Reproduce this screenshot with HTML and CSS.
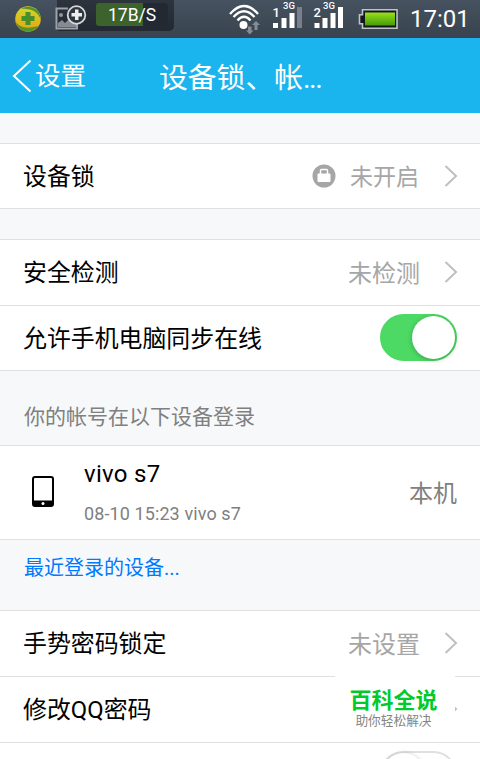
FILE: index.html
```html
<!DOCTYPE html>
<html lang="zh-CN">
  <head>
    <meta charset="UTF-8" />
    <title>设备锁、帐号安全</title>
    <link rel="stylesheet" href="styles.css">
  </head>
  <body>
    <!-- status bar -->
    <div class="status">
      <svg class="guard" width="28" height="28" viewBox="0 0 28 28">
        <defs>
          <linearGradient id="ball" x1="0" y1="0" x2="0" y2="1">
            <stop offset="0" stop-color="#d4d72b" />
            <stop offset="1" stop-color="#e5a40f" />
          </linearGradient>
        </defs>
        <circle cx="14" cy="14" r="12.800" fill="url(#ball)" />
        <path d="M7 4C14-1 27 3 26.500 14C24 7 17 3 7 4zM2 17c4 6 11 7 22 4c-5 8-19 8-22-4z" fill="#56942b" />
        <path d="M11.500 7h5v4h4v5h-4v4h-5v-4h-4v-5h4z" fill="#478f2c" />
      </svg>
      <div class="speed">
        <svg class="speed-icon" width="34" height="30" viewBox="0 0 34 30">
          <path d="M13 8.500H1.500V28.500H22V20" fill="none" stroke="#9da2a8" stroke-width="2" />
          <circle cx="6" cy="15" r="2" fill="#90969c" />
          <path d="M3 27v-4l4-3 3 3 6-6 5 6v4z" fill="#858b91" />
          <circle cx="21.500" cy="15" r="8.800" fill="#30363e" stroke="#d5d7d9" stroke-width="1.800" />
          <path d="M20 9.500h3.500V13H27v3.500h-3.500V20H20v-3.500h-3.500V13H20z" fill="#eee" />
        </svg>
        <span class="speed-text">17B/S</span>
      </div>
      <svg class="signals" width="172" height="38" viewBox="228 0 172 38">
        <!-- wifi -->
        <g fill="none" stroke="#fff" stroke-width="2.300">
          <path d="M230 14Q244-2 258 14M233.500 17Q244 5.500 254.500 17M237.500 20.500Q244 13 250.500 20.500" />
        </g>
        <circle cx="243.500" cy="25" r="4" fill="#fff" />
        <path d="M248 26.500h3.500v4h2L249.800 34.500 246 30.500h2zM254.500 30v-5h-2.500l4-4 4 4h-2.500v5z" fill="#858c94" />
        <!-- sim 1 -->
        <path d="M273 23h5v5h-5zM281.500 18h5v10h-5zM289.500 13h5v15h-5z" fill="#fff" />
        <path d="M297 7h5v21h-5z" fill="#78808a" />
        <!-- sim 2 -->
        <path d="M314.500 23h5v5h-5zM322.500 18h5v10h-5zM330.500 13h5v15h-5zM338 7h5v21h-5z" fill="#fff" />
        <g class="sim">
          <text x="272.500" y="17" font-size="13">1</text>
          <text x="283" y="9" font-size="9.500">3G</text>
          <text x="313.500" y="17" font-size="13">2</text>
          <text x="323" y="9" font-size="9.500">3G</text>
        </g>
        <!-- battery -->
        <defs>
          <linearGradient id="power" x1="0" y1="0" x2="0" y2="1">
            <stop offset="0" stop-color="#9ee01c" />
            <stop offset=".4" stop-color="#73c513" />
            <stop offset="1" stop-color="#479b08" />
          </linearGradient>
        </defs>
        <path d="M362.500 9.700h34.500v18.600h-34.500v-4.500h-3v-9h3z" fill="#14181c" stroke="#bfc3c7" stroke-width="1.600" />
        <path d="M365 12.500h30v13h-30z" fill="url(#power)" />
      </svg>
      <span class="time">17:01</span>
    </div>

    <!-- title bar -->
    <header class="bar">
      <a class="back" href="#">
        <svg width="20" height="34" viewBox="0 0 20 34"><path d="M18.500 1.500L2 17l16.500 15.500" fill="none" stroke="#fff" stroke-width="2" /></svg>
        <span>设置</span>
      </a>
      <h1>设备锁、帐<span class="dots">...</span></h1>
    </header>

    <ul class="list first">
      <li class="row">
        <span class="label">设备锁</span>
        <svg class="lock" width="24" height="24" viewBox="0 0 24 24">
          <circle cx="12" cy="12" r="11.500" fill="#a6a6a6" />
          <path d="M8.500 10V6.500Q8.500 5.500 9.500 5.500h5q1 0 1 1V10" fill="none" stroke="#fff" stroke-width="1.500" />
          <rect x="5.500" y="9.500" width="13" height="8.500" rx="1" fill="#fff" />
        </svg>
        <span class="value small">未开启</span>
        <svg class="arrow" width="14" height="24" viewBox="0 0 14 24"><path d="M1.500 2L12 12 1.500 22" /></svg>
      </li>
    </ul>

    <ul class="list">
      <li class="row">
        <span class="label">安全检测</span>
        <span class="value">未检测</span>
        <svg class="arrow" width="14" height="24" viewBox="0 0 14 24"><path d="M1.500 2L12 12 1.500 22" /></svg>
      </li>
      <li class="row">
        <span class="label">允许手机电脑同步在线</span>
        <span class="switch on"></span>
      </li>
    </ul>

    <h2 class="caption">你的帐号在以下设备登录</h2>
    <div class="device">
      <svg class="phone" width="22" height="31" viewBox="0 0 22 31">
        <path fill-rule="evenodd" d="M3 0h16q3 0 3 3v25q0 3-3 3H3q-3 0-3-3V3Q0 0 3 0zM2 3v21.500h18V3q0-1-1-1H3Q2 2 2 3z" fill="#000" />
        <circle cx="11" cy="27.500" r="1.500" fill="#fff" />
      </svg>
      <div class="info">
        <p class="name">vivo s7</p>
        <p class="date">08-10 15:23 vivo s7</p>
      </div>
      <span class="local">本机</span>
    </div>
    <a class="recent" href="#">最近登录的设备...</a>

    <ul class="list last">
      <li class="row">
        <span class="label">手势密码锁定</span>
        <span class="value">未设置</span>
        <svg class="arrow" width="14" height="24" viewBox="0 0 14 24"><path d="M1.500 2L12 12 1.500 22" /></svg>
      </li>
      <li class="row">
        <span class="label">修改QQ密码</span>
        <svg class="arrow" width="14" height="24" viewBox="0 0 14 24"><path d="M1.500 2L12 12 1.500 22" /></svg>
        <!-- badge over the row -->
        <div class="mark">
          <strong>百科全说</strong>
          <span>助你轻松解决</span>
        </div>
      </li>
      <li class="row off-row">
        <span class="switch"></span>
      </li>
    </ul>
  </body>
</html>
```

FILE: styles.css
```css
/* reset */
html,
body,
ul,
h1,
h2,
p {
  margin: 0;
  padding: 0;
}

* {
  box-sizing: border-box;
}

body {
  background-color: #f7f8fa;
  color: #000;
  font-family: Roboto, "Noto Sans CJK SC", sans-serif;
  font-size: 24px;
}

ul {
  list-style: none;
}

a {
  text-decoration: none;
}

svg {
  display: block;
  flex-shrink: 0;
}

/* status bar */
.status {
  display: flex;
  height: 38px;
  padding-left: 14px;
  background: linear-gradient(#46525f, #394350);
  color: #fff;
}

.guard {
  margin-top: 5px;
}

.speed {
  display: flex;
  width: 119px;
  height: 31px;
  margin-left: 13px;
  background: linear-gradient(#2d343e, #222932) no-repeat 2px 0 / 117px 31px;
  border-radius: 0 0 5px 5px;
}

.speed-text {
  width: 72px;
  height: 23px;
  margin: 3px 0 0 7px;
  padding-left: 12px;
  background: linear-gradient(90deg, #3b632b 47px, #222932 47px);
  border-radius: 3px;
  font-size: 17.500px;
  line-height: 24px;
}

.signals {
  margin-left: 54px;
}

.sim {
  fill: #fff;
  font-family: Roboto, sans-serif;
  font-weight: 500;
}

.time {
  margin-left: 10px;
  font-size: 24px;
  line-height: 39px;
}

/* title bar */
.bar {
  display: flex;
  align-items: center;
  height: 75px;
  padding-left: 12px;
  background-color: #1ab4ee;
}

.back {
  display: flex;
  align-items: center;
  width: 147px;
  gap: 3px;
  color: #fff;
  font-size: 25.500px;
}

.back span {
  padding-bottom: 4px;
}

.bar h1 {
  padding-top: 4px;
  color: #fff;
  font-size: 28.800px;
  font-weight: normal;
  line-height: 70px;
}

.dots {
  letter-spacing: -1.500px;
}

/* setting rows */
.list {
  margin-top: 30px;
  border-bottom: 1px solid #dee0e2;
  background-color: #fff;
}

.row {
  position: relative;
  display: flex;
  align-items: center;
  height: 66px;
  padding: 0 22px 0 23px;
  border-top: 1px solid #dee0e2;
}

.first .row,
.list .row:nth-child(2) {
  height: 65px;
}

.last .row:nth-child(2) {
  height: 66px;
}

.label {
  flex: 1;
  padding-top: 2px;
  font-size: 23.900px;
  line-height: 63px;
}

.value {
  margin-right: 24px;
  padding-bottom: 3px;
  color: #a6a6a6;
}

.small {
  margin: 0 25px 0 14px;
  font-size: 23px;
}

.arrow {
  margin-bottom: 1px;
}

.arrow path {
  fill: none;
  stroke: #c0c0c0;
  stroke-width: 2;
}

/* switch */
.switch {
  width: 77px;
  height: 47px;
  margin: 0 1px 2px 0;
  border: 2px solid #e0e0e0;
  border-radius: 24px;
}

.switch::after {
  content: '';
  display: block;
  width: 43px;
  height: 43px;
  border-radius: 50%;
  background-color: #fff;
  box-shadow: 0 1px 5px rgba(0, 0, 0, .25);
}

.on {
  border-color: #4cd964;
  background-color: #4cd964;
}

.on::after {
  margin-left: 30px;
}

/* devices */
.caption {
  height: 74px;
  padding: 9px 24px 0;
  color: #808080;
  font-size: 21px;
  font-weight: normal;
  line-height: 75px;
}

.device {
  display: flex;
  align-items: center;
  height: 95px;
  padding: 0 23px 0 32px;
  border: solid #dee0e2;
  border-width: 1px 0;
  background-color: #fff;
}

.phone {
  margin-bottom: 3px;
}

.info {
  flex: 1;
  margin: 2px 0 0 30px;
}

.name {
  font-size: 24px;
  letter-spacing: .3px;
  line-height: 40px;
}

.date {
  color: #808080;
  font-size: 18px;
  letter-spacing: .1px;
  line-height: 40px;
}

.local {
  padding-bottom: 3px;
  color: #808080;
}

.recent {
  display: block;
  height: 70px;
  padding-left: 24px;
  color: #007aff;
  font-size: 20px;
  line-height: 56px;
}

.last {
  height: 149px;
  margin-top: 0;
  border-bottom: 0;
  overflow: hidden;
}

.off-row {
  justify-content: flex-end;
}

/* badge */
.mark {
  position: absolute;
  left: 335px;
  top: -3px;
  display: flex;
  flex-direction: column;
  align-items: center;
  width: 120px;
  height: 66px;
  padding: 13px 3px 0 0;
  background-color: #fff;
}

.mark strong {
  color: #00cb2c;
  font-size: 22px;
  font-weight: 700;
  line-height: 28px;
}

.mark span {
  color: #858585;
  font-size: 12.700px;
  line-height: 12px;
}
```
